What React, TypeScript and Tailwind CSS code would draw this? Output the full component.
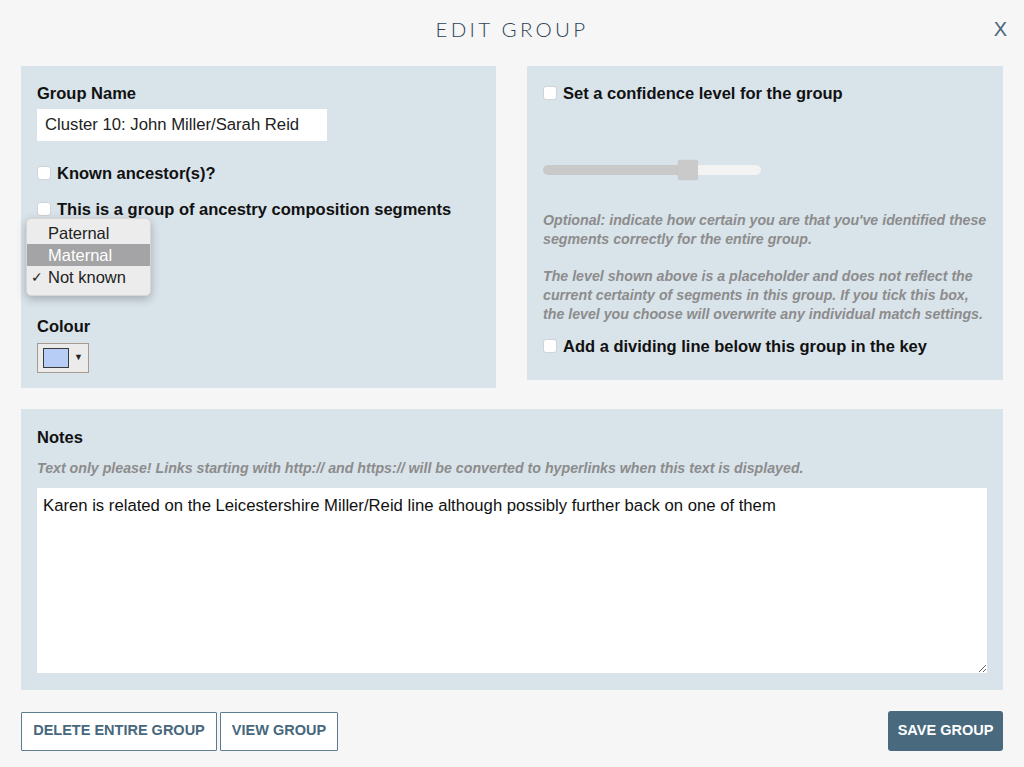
import React from 'react';

const sans = { fontFamily: '"Liberation Sans", Arial, Helvetica, sans-serif' };

function Check({ label }: { label: string }) {
  return (
    <label className="flex items-center h-5 gap-[6px] text-[16.5px] font-bold text-[#111]">
      <span className="w-[14px] h-[14px] bg-white rounded-[3px] border border-[#cfd4d8] shrink-0" />
      <span className="leading-5">{label}</span>
    </label>
  );
}

export default function App() {
  return (
    <div className="w-[1024px] h-[767px] bg-[#f7f6f6] overflow-hidden" style={sans}>
      {/* 헤더 */}
      <div className="relative h-[66px]">
        <h1
          className="absolute left-0 right-0 top-[17px] text-center text-[20.5px] leading-6 font-light tracking-[0.16em] text-[#2e4255]"
          style={{ fontFamily: 'Lato, "Open Sans", sans-serif' }}
        >
          EDIT GROUP
        </h1>
        <button className="absolute right-[17px] top-[17px] text-[20px] leading-6 text-[#46687f]">X</button>
      </div>

      <div className="px-[21px]">
        <div className="flex gap-[31px] items-start">
          {/* 왼쪽 패널 */}
          <div className="w-[475px] h-[322px] bg-[#d9e3ea] px-4 pt-[18px]">
            <div className="text-[16.5px] leading-[18px] font-bold text-[#111]">Group Name</div>
            <div className="mt-[7px] w-[290px] h-8 bg-white flex items-center px-2 text-[16.7px] text-[#222]">
              Cluster 10: John Miller/Sarah Reid
            </div>
            <div className="mt-[22px]"><Check label="Known ancestor(s)?" /></div>
            <div className="mt-4"><Check label="This is a group of ancestry composition segments" /></div>
            <div className="relative h-[98px]">
              <div className="absolute left-[-11px] top-[-1px] w-[125px] bg-[#ececec] rounded-[5px] shadow-[0_3px_10px_rgba(0,0,0,0.25)] border border-[#d6d6d6] pt-[3px] pb-[7px] text-[16.5px] text-[#222]">
                <div className="h-[22px] leading-[22px] pl-[21px]">Paternal</div>
                <div className="h-[22px] leading-[22px] pl-[21px] bg-[#a4a4a6] text-white">Maternal</div>
                <div className="h-[22px] leading-[22px] pl-[4px] flex">
                  <span className="w-[17px] text-[14px]">✓</span>Not known
                </div>
              </div>
            </div>
            <div className="text-[16.5px] leading-[18px] font-bold text-[#111]">Colour</div>
            <div className="mt-2 w-[52px] h-[30px] border border-[#a79a8e] bg-[#ebebeb] flex items-center pl-[5px] gap-[5px]">
              <span className="w-[26px] h-[20px] bg-[#b8cdf6] border border-[#3a3a3a]" />
              <span className="text-[9px] text-[#222]">▼</span>
            </div>
          </div>

          {/* 오른쪽 패널 */}
          <div className="w-[476px] h-[314px] bg-[#d9e3ea] px-4 pt-[17px]">
            <Check label="Set a confidence level for the group" />
            <div className="mt-[57px] relative w-[218px] h-5 flex items-center">
              <div className="w-[135px] h-[10px] bg-[#c9c9c9] rounded-l-full" />
              <div className="w-[20px] h-[20px] bg-[#cacaca] rounded-[3px] shadow-[0_0_1px_rgba(0,0,0,0.2)]" />
              <div className="flex-1 h-[10px] bg-[#f3f3f3] rounded-r-full" />
            </div>
            <p className="mt-[31px] mr-[-2px] text-[14.2px] leading-[19px] font-bold italic text-[#8c8c8c]">
              Optional: indicate how certain you are that you've identified these segments correctly for the entire group.
            </p>
            <p className="mt-[18px] mr-[-2px] text-[14.2px] leading-[19px] font-bold italic text-[#8c8c8c]">
              The level shown above is a placeholder and does not reflect the current certainty of segments in this group. If you tick this box, the level you choose will overwrite any individual match settings.
            </p>
            <div className="mt-3"><Check label="Add a dividing line below this group in the key" /></div>
          </div>
        </div>

        {/* 메모 */}
        <div className="mt-[21px] h-[281px] bg-[#d9e3ea] px-4 pt-[19px]">
          <div className="text-[16.5px] leading-[18px] font-bold text-[#111]">Notes</div>
          <p className="mt-[14px] text-[14.2px] leading-4 font-bold italic text-[#8c8c8c]">
            Text only please! Links starting with http:// and https:// will be converted to hyperlinks when this text is displayed.
          </p>
          <textarea
            className="mt-[12px] block w-full h-[185px] bg-white px-[6px] py-[9px] text-[16.7px] leading-[18px] text-[#111] outline-none resize-y"
            style={sans}
            defaultValue="Karen is related on the Leicestershire Miller/Reid line although possibly further back on one of them"
          />
        </div>

        {/* 버튼 */}
        <div className="mt-[21px] flex items-center">
          <button className="w-[196px] h-[39px] border border-[#5b7b90] bg-white text-[14.5px] font-bold text-[#47677c] rounded-[1px]">
            DELETE ENTIRE GROUP
          </button>
          <button className="ml-[3px] w-[118px] h-[39px] border border-[#5b7b90] bg-white text-[14.5px] font-bold text-[#47677c] rounded-[1px]">
            VIEW GROUP
          </button>
          <button className="ml-auto w-[115px] h-[40px] bg-[#48697e] text-white text-[14.5px] font-bold rounded-[3px]">
            SAVE GROUP
          </button>
        </div>
      </div>
    </div>
  );
}
